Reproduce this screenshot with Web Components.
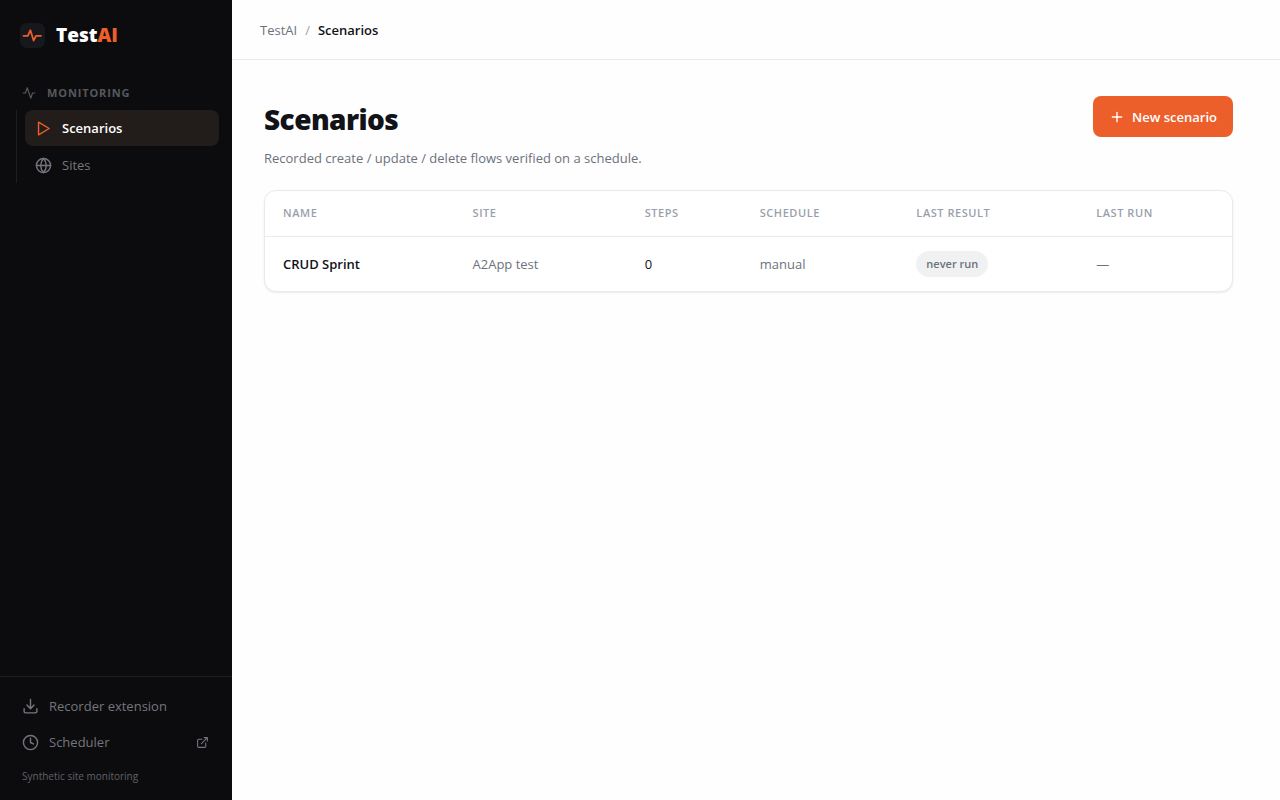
<!DOCTYPE html>
<html lang="en">
<head>
<meta charset="utf-8">
<meta name="viewport" content="width=device-width, initial-scale=1">
<title>Scenarios - TestAI</title>
<style>
html, body { margin: 0; height: 100%; }
body { font: 13px/20px "Segoe UI", "Open Sans", "Noto Sans", sans-serif; color: #111318; background: #fefefe; }
</style>
</head>
<body>
<app-shell>
  <app-sidebar slot="sidebar">
    <nav-item slot="nav" icon="play" href="#scenarios" active>Scenarios</nav-item>
    <nav-item slot="nav" icon="globe" href="#sites">Sites</nav-item>
    <nav-item slot="footer" icon="download" href="#recorder">Recorder extension</nav-item>
    <nav-item slot="footer" icon="clock" href="#scheduler" external>Scheduler</nav-item>
  </app-sidebar>
  <app-breadcrumb slot="top" current="Scenarios"></app-breadcrumb>
  <page-header heading="Scenarios">
    Recorded create / update / delete flows verified on a schedule.
    <action-button slot="action">New scenario</action-button>
  </page-header>
  <scenario-table></scenario-table>
</app-shell>

<script>
const ICONS = {
  pulse: '<path d="M22 12h-4l-3 9L9 3l-3 9H2"/>',
  play: '<path d="M5 3l15 9-15 9z"/>',
  globe: '<circle cx="12" cy="12" r="10"/><path d="M2 12h20M12 2a15 15 0 0 1 4 10 15 15 0 0 1-4 10 15 15 0 0 1-4-10 15 15 0 0 1 4-10z"/>',
  download: '<path d="M21 15v4a2 2 0 0 1-2 2H5a2 2 0 0 1-2-2v-4M7 10l5 5 5-5M12 15V2"/>',
  clock: '<circle cx="12" cy="12" r="10"/><path d="M12 6v6l4 2"/>',
  external: '<path d="M18 13v6a2 2 0 0 1-2 2H5a2 2 0 0 1-2-2V8a2 2 0 0 1 2-2h6M15 3h6v6M10 14L21 3"/>',
  plus: '<path d="M12 5v14M5 12h14"/>'
};
const icon = (name, size, stroke = 2) =>
  `<svg width="${size}" height="${size}" viewBox="0 0 24 24" fill="none" stroke="currentColor" stroke-width="${stroke}" stroke-linecap="round" stroke-linejoin="round" aria-hidden="true">${ICONS[name]}</svg>`;

class BaseElement extends HTMLElement {
  constructor() { super(); this.attachShadow({ mode: 'open' }); }
  connectedCallback() {
    this.shadowRoot.innerHTML = `<style>*{box-sizing:border-box}svg{display:block;flex:none}${this.styles()}</style>${this.render()}`;
  }
}

customElements.define('app-shell', class extends BaseElement {
  styles() { return `
    :host { display: grid; grid-template-columns: 232px 1fr; min-height: 100vh; }
    .content { display: flex; flex-direction: column; min-width: 0; }
    main { padding: 36px 47px 36px 32px; }`; }
  render() { return `
    <slot name="sidebar"></slot>
    <div class="content"><slot name="top"></slot><main><slot></slot></main></div>`; }
});

customElements.define('app-sidebar', class extends BaseElement {
  styles() { return `
    :host { display: flex; flex-direction: column; background: #0c0c0e; color: #65666c; }
    .brand { display: flex; align-items: center; gap: 11px; padding: 0 20px; height: 70px; color: #fff; text-decoration: none;
      font-size: 19px; font-weight: 800; line-height: 26px; }
    .brand b { font-weight: 800; color: #ec5f2b; }
    nav { flex: 1; padding: 8px 13px 0 16px; }
    .group { display: flex; align-items: center; gap: 11px; height: 32px; padding: 0 0 2px 6px; margin: 0;
      font-size: 11px; line-height: 16px; font-weight: 700; letter-spacing: 0.08em; color: #57585d; }
    .items { display: grid; gap: 1px; border-left: 1px solid #1e1e21; padding-left: 8px; }
    footer { border-top: 1px solid #1e1e21; padding: 11px 13px 16px 12px; }
    footer p { margin: 0; padding: 8px 10px 0; font-size: 10px; line-height: 16px; color: #606167; }`; }
  render() { return `
    <a class="brand" href="#home">
      <svg width="25" height="25" viewBox="0 0 25 25" fill="none" aria-hidden="true"><rect width="25" height="25" rx="7" fill="#16181c"/><path d="M3.5 12.8H7.8L10.4 7.2L13.6 17.6L16 12.8H21" stroke="#ec5f2b" stroke-width="1.8" stroke-linecap="round" stroke-linejoin="round"/></svg>
      <span>Test<b>AI</b></span></a>
    <nav aria-label="Monitoring">
      <h2 class="group">${icon('pulse', 14)}MONITORING</h2>
      <div class="items"><slot name="nav"></slot></div>
    </nav>
    <footer><slot name="footer"></slot><p>Synthetic site monitoring</p></footer>`; }
});

customElements.define('nav-item', class extends BaseElement {
  styles() { return `
    :host { display: block; }
    a { display: flex; align-items: center; gap: 10px; height: 36px; padding: 0 10px; border-radius: 8px;
      font-weight: 500; color: #75767d; text-decoration: none; }
    :host([active]) a { background: #221d1a; color: #fff; font-weight: 600; }
    :host([active]) svg { color: #ec5f2b; }
    .label { flex: 1; }`; }
  render() {
    return `<a href="${this.getAttribute('href')}">${icon(this.getAttribute('icon'), 17)}<span class="label"><slot></slot></span>${this.hasAttribute('external') ? icon('external', 13) : ''}</a>`;
  }
});

customElements.define('app-breadcrumb', class extends BaseElement {
  styles() { return `
    :host { display: block; border-bottom: 1px solid #e9eaec; }
    nav { display: flex; align-items: center; gap: 8px; height: 59px; padding: 0 28px; }
    a { color: #6c727d; text-decoration: none; }
    i { font-style: normal; color: #9a9fa9; }
    span { font-weight: 600; }`; }
  render() { return `<nav aria-label="Breadcrumb"><a href="#home">TestAI</a><i>/</i><span aria-current="page">${this.getAttribute('current')}</span></nav>`; }
});

customElements.define('page-header', class extends BaseElement {
  styles() { return `
    :host { display: flex; justify-content: space-between; align-items: flex-start; gap: 16px; margin-bottom: 22px; }
    h1 { margin: 5px 0 11px; font-size: 28px; line-height: 36px; font-weight: 800; letter-spacing: -0.02em; }
    p { margin: 0; color: #6c727d; }`; }
  render() { return `<div><h1>${this.getAttribute('heading')}</h1><p><slot></slot></p></div><slot name="action"></slot>`; }
});

customElements.define('action-button', class extends BaseElement {
  styles() { return `
    :host { display: block; flex: none; }
    button { display: flex; align-items: center; gap: 7px; height: 41px; padding: 0 16px; border: 0; border-radius: 8px;
      background: #ec5f2b; color: #fff; font: inherit; font-weight: 600; white-space: nowrap; }`; }
  render() { return `<button type="button">${icon('plus', 16)}<span><slot></slot></span></button>`; }
});

customElements.define('scenario-table', class extends BaseElement {
  styles() { return `
    :host { display: block; border: 1px solid #e9eaec; border-radius: 12px; overflow: hidden; background: #fff; box-shadow: 0 1px 2px rgba(16,18,24,.08); }
    table { width: 100%; table-layout: fixed; border-collapse: separate; border-spacing: 0; }
    th, td { padding: 0 18px; text-align: left; vertical-align: middle; }
    th { height: 46px; padding-bottom: 2px; border-bottom: 1px solid #e9eaec; font-size: 11px; line-height: 16px; font-weight: 600; letter-spacing: 0.05em; color: #9a9fac; white-space: nowrap; }
    td { height: 54px; color: #6c727d; }
    .name { font-weight: 600; color: #111318; }
    .steps { color: #111318; }
    .badge { display: inline-block; padding: 3px 10px; border-radius: 13px; background: #f0f1f3; font-size: 11px; line-height: 20px; font-weight: 600; vertical-align: middle; }`; }
  render() { return `
    <table aria-label="Scenarios">
      <colgroup><col style="width:19.6%"><col style="width:17.8%"><col style="width:11.9%"><col style="width:16.2%"><col style="width:18.6%"><col></colgroup>
      <thead><tr><th scope="col">NAME</th><th scope="col">SITE</th><th scope="col">STEPS</th><th scope="col">SCHEDULE</th><th scope="col">LAST RESULT</th><th scope="col">LAST RUN</th></tr></thead>
      <tbody><tr><td class="name">CRUD Sprint</td><td>A2App test</td><td class="steps">0</td><td>manual</td><td><span class="badge">never run</span></td><td>—</td></tr></tbody>
    </table>`; }
});
</script>
</body>
</html>
